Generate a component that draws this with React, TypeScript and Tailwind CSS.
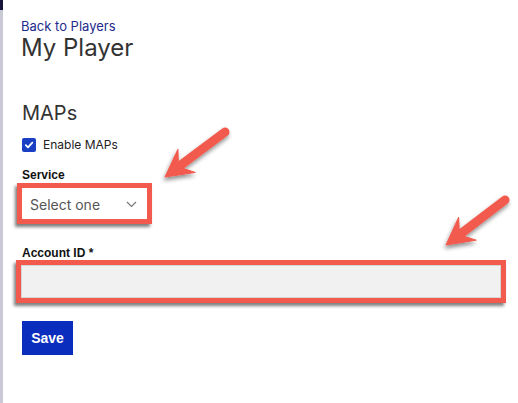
import React from "react";

type Pt = [number, number];

// annotation arrow: shaft + swept head, drawn from tail to tip
function arrowPoints(tail: Pt, tip: Pt) {
  const dx = tip[0] - tail[0];
  const dy = tip[1] - tail[1];
  const len = Math.hypot(dx, dy);
  const u: Pt = [dx / len, dy / len];
  const n: Pt = [-u[1], u[0]];
  const at = (back: number, side: number): Pt => [tip[0] - u[0] * back + n[0] * side, tip[1] - u[1] * back + n[1] * side];
  const head = [at(0, 0), at(27, 14.5), at(20, 4.5), at(20, -4.5), at(27, -14.5)];
  return {
    head: head.map((p) => p.join(",")).join(" "),
    shaftEnd: at(18, 0),
  };
}

function Arrow({ tail, tip }: { tail: Pt; tip: Pt }) {
  const a = arrowPoints(tail, tip);
  return (
    <g filter="url(#arrow-shadow)">
      <line x1={tail[0]} y1={tail[1]} x2={a.shaftEnd[0]} y2={a.shaftEnd[1]} stroke="#f25a4e" strokeWidth={9} strokeLinecap="round" />
      <polygon points={a.head} fill="#f25a4e" strokeLinejoin="round" stroke="#f25a4e" strokeWidth={1} />
    </g>
  );
}

const label = "font-['Liberation_Sans',Arial,sans-serif] text-[12px] font-bold text-[#111]";
const callout = "border-[5px] border-[#f25a4e] shadow-[-2px_3px_3px_rgba(0,0,0,0.5)]";

export default function App() {
  return (
    <div className="relative flex h-[403px] w-full overflow-hidden bg-white font-['Inter',sans-serif] text-[#333]">
      <div className="flex w-[3px] flex-col bg-[#c9c9d6]">
        <div className="h-[10px] bg-[#16163a]" />
      </div>

      <main className="flex flex-1 flex-col pl-[18px] pt-[17px]">
        <a href="#" className="text-[13px] leading-[18px] text-[#232b8c]">Back to Players</a>
        <h1 className="text-[24px] leading-[26px] text-[#333]">My Player</h1>

        <h2 className="mt-10 pl-px text-[20px] leading-[24px] text-[#333]">MAPs</h2>

        <label className="mt-3 flex h-4 items-center gap-[7px] pl-px text-[12px] text-[#222]">
          <span className="flex h-[14px] w-[14px] items-center justify-center rounded-[2px] bg-[#1b3fc4]">
            <svg width="10" height="10" viewBox="0 0 10 10">
              <path d="M1.8 5.2 4 7.3 8.3 2.7" fill="none" stroke="white" strokeWidth="1.8" strokeLinecap="round" strokeLinejoin="round" />
            </svg>
          </span>
          Enable MAPs
        </label>

        <p className={`mt-[14px] pl-px leading-[16px] ${label}`}>Service</p>
        <div className={`ml-[-4px] w-[135px] bg-white ${callout}`}>
          <div className="flex h-[31px] items-center justify-between pl-[8px] pr-[10px] pt-[2px]">
            <span className="text-[14px] text-[#555]">Select one</span>
            <svg width="11" height="7" viewBox="0 0 11 7">
              <path d="M1 1 5.5 5.5 10 1" fill="none" stroke="#777" strokeWidth="1.2" />
            </svg>
          </div>
        </div>

        <p className={`mt-[22px] pl-px leading-[14px] ${label}`}>Account ID *</p>
        <div className={`ml-[-5px] mr-[12px] ${callout}`}>
          <div className="h-[33px] border border-[#d6d6d6] bg-[#f1f1f1]" />
        </div>

        <div className="mt-[18px] pl-px">
          <button className="h-[34px] w-[51px] bg-[#0a2dbd] font-['Liberation_Sans',Arial,sans-serif] text-[14px] font-bold text-white">Save</button>
        </div>
      </main>

      <svg className="pointer-events-none absolute inset-0" width="518" height="403">
        <defs>
          <filter id="arrow-shadow" x="-20%" y="-20%" width="140%" height="140%">
            <feDropShadow dx="-1" dy="3" stdDeviation="2" floodColor="#000" floodOpacity="0.45" />
          </filter>
        </defs>
        <Arrow tail={[225, 132]} tip={[165, 177]} />
        <Arrow tail={[505, 200]} tip={[446, 245]} />
      </svg>
    </div>
  );
}
